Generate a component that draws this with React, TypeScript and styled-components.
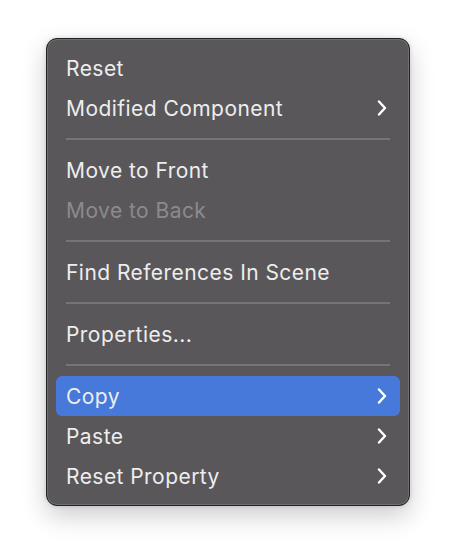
import React from "react";
import styled, { createGlobalStyle } from "styled-components";

const Global = createGlobalStyle`
  html, body { margin: 0; padding: 0; background: #ffffff; }
  body { font-family: Inter, "Noto Sans", sans-serif; -webkit-font-smoothing: antialiased; }
`;

const Page = styled.div`
  min-height: 100vh;
  box-sizing: border-box;
  padding: 38px 0 40px 46px;
`;

const Menu = styled.div`
  width: 364px;
  box-sizing: border-box;
  background: #59575a;
  border: 1px solid #232224;
  border-radius: 11px;
  padding: 9px 0;
  display: flex;
  flex-direction: column;
  box-shadow: inset 0 0 0 1px rgba(255, 255, 255, 0.14), 0 10px 26px rgba(0, 0, 0, 0.2),
    0 0 4px rgba(0, 0, 0, 0.14);
`;

const Row = styled.div<{ $active?: boolean; $disabled?: boolean }>`
  height: 40px;
  margin: 0 9px;
  padding: 0 11px 0 10px;
  border-radius: 6px;
  display: flex;
  align-items: center;
  justify-content: space-between;
  font-size: 21px;
  letter-spacing: 0.45px;
  color: ${(p) => (p.$disabled ? "#8c8a8d" : "#eeedee")};
  background: ${(p) => (p.$active ? "#4779db" : "transparent")};
`;

const Label = styled.span``;

const Separator = styled.div`
  height: 2px;
  margin: 10px 19px;
  background: #767477;
`;

const Chevron = () => (
  <svg width="10" height="16" viewBox="0 0 10 16" style={{ marginRight: 2 }}>
    <path d="M2 1.5 L8 8 L2 14.5" fill="none" stroke="#ffffff" strokeWidth="2.4" strokeLinecap="round" strokeLinejoin="round" />
  </svg>
);

type Item = { label: string; sub?: boolean; disabled?: boolean; active?: boolean } | "sep";

const items: Item[] = [
  { label: "Reset" },
  { label: "Modified Component", sub: true },
  "sep",
  { label: "Move to Front" },
  { label: "Move to Back", disabled: true },
  "sep",
  { label: "Find References In Scene" },
  "sep",
  { label: "Properties..." },
  "sep",
  { label: "Copy", sub: true, active: true },
  { label: "Paste", sub: true },
  { label: "Reset Property", sub: true },
];

export default function App() {
  return (
    <Page>
      <Global />
      <Menu>
        {items.map((it, i) =>
          it === "sep" ? (
            <Separator key={i} />
          ) : (
            <Row key={i} $active={it.active} $disabled={it.disabled}>
              <Label>{it.label}</Label>
              {it.sub && <Chevron />}
            </Row>
          )
        )}
      </Menu>
    </Page>
  );
}
